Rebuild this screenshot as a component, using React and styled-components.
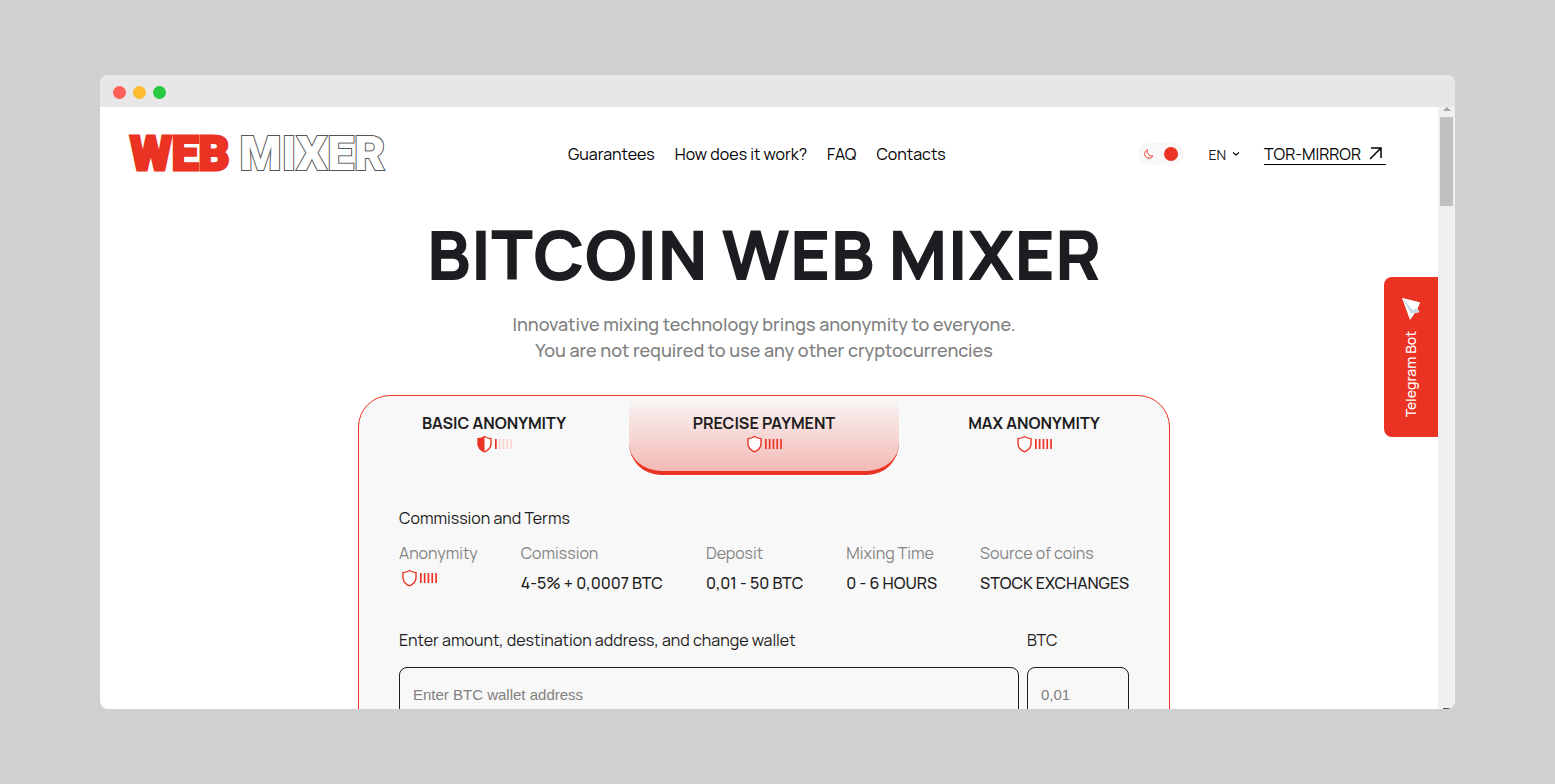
import React, { useState } from "react";
import styled, { createGlobalStyle } from "styled-components";

const GlobalStyle = createGlobalStyle`
  *,
  *::before,
  *::after {
    box-sizing: border-box;
  }

  body {
    margin: 0;
    background: #d0d0d0;
    color: #1c1c21;
    font-family: Manrope, Inter, sans-serif;
    font-size: 16px;
    line-height: 22px;
  }

  h1,
  h2,
  p,
  dl,
  dd {
    margin: 0;
  }
`;

const Desktop = styled.div`
  display: flex;
  height: 100vh;
  padding: 75px 100px;
`;

const Browser = styled.div`
  display: flex;
  flex: 1;
  flex-direction: column;
  min-width: 0;
  overflow: hidden;
  border-radius: 8px;
  background: #fff;
`;

const TitleBar = styled.div`
  display: flex;
  flex: none;
  align-items: center;
  gap: 7px;
  height: 32px;
  padding: 2px 13px 0;
  background: #e7e7e7;
`;

const Dot = styled.span`
  width: 13px;
  height: 13px;
  border-radius: 50%;
  background: ${props => props.$color};
`;

const Viewport = styled.div`
  display: flex;
  flex: 1;
  min-height: 0;
`;

const Page = styled.div`
  position: relative;
  flex: 1;
  min-width: 0;
  overflow: hidden;
`;

const ScrollTrack = styled.div`
  display: flex;
  flex: none;
  flex-direction: column;
  align-items: center;
  width: 17px;
  background: #f0f0f0;
`;

const ScrollArrow = styled.span`
  margin-bottom: 6px;
  border: 4px solid transparent;
  border-top: 0;
  border-bottom-color: #a3a3a3;
`;

const ScrollThumb = styled.span`
  width: 13px;
  height: 89px;
  background: #c1c1c1;
`;

const ScrollEnd = styled.span`
  width: 7px;
  height: 1px;
  margin-top: auto;
  background: #505050;
`;

const Header = styled.header`
  display: flex;
  align-items: center;
  justify-content: space-between;
  padding: 28px 52px 0 30px;
`;

const Logo = styled.a`
  display: flex;
  gap: 10px;
  color: #eb3323;
  font-family: Roboto, sans-serif;
  font-size: 48px;
  font-weight: 900;
  line-height: 38px;
  text-decoration: none;
`;

const LogoSolid = styled.span`
  -webkit-text-stroke: 3px #eb3323;
`;

const LogoOutline = styled.span`
  color: #fff;
  -webkit-text-stroke: 2px #555;
  paint-order: stroke fill;
`;

const Nav = styled.nav`
  display: flex;
  gap: 20px;
  margin-right: 10px;
`;

const NavLink = styled.a`
  color: #000;
  text-decoration: none;
`;

const Tools = styled.div`
  display: flex;
  align-items: center;
  gap: 24px;
`;

const ThemeSwitch = styled.button`
  display: flex;
  align-items: center;
  justify-content: space-between;
  width: 46px;
  height: 22px;
  padding: 0 6px;
  border: 0;
  border-radius: 11px;
  background: #f8f8f8;
`;

const Knob = styled.span`
  width: 14px;
  height: 14px;
  border-radius: 50%;
  background: #eb3323;
`;

const Language = styled.button`
  display: flex;
  align-items: center;
  gap: 6px;
  padding: 0;
  border: 0;
  background: none;
  color: #1c1c21;
  font-family: inherit;
  font-size: 14px;
`;

const TorLink = styled.a`
  display: flex;
  align-items: center;
  gap: 8px;
  height: 22px;
  padding-right: 4px;
  border-bottom: 1px solid #000;
  color: #000;
  text-decoration: none;
`;

const Hero = styled.section`
  padding: 40px 40px 32px 30px;
  text-align: center;
`;

const Title = styled.h1`
  margin-bottom: 16px;
  font-size: 69px;
  font-weight: 800;
  line-height: 82px;
`;

const Lead = styled.p`
  color: #808080;
  font-size: 18px;
  font-weight: 500;
  line-height: 26px;
`;

const CardRow = styled.div`
  display: flex;
  justify-content: center;
  padding: 0 40px 0 30px;
`;

const Card = styled.section`
  flex: 1;
  max-width: 812px;
  overflow: hidden;
  border: 1px solid #eb3323;
  border-radius: 32px;
  background: #f8f8f8;
`;

const Tabs = styled.div`
  display: grid;
  grid-template-columns: repeat(3, 1fr);
`;

const Tab = styled.button`
  display: flex;
  flex-direction: column;
  align-items: center;
  height: 79px;
  padding: 16px 0 0;
  border: 0 solid #eb3323;
  border-bottom-width: ${props => (props.$active ? "4px" : "0")};
  border-radius: 0 0 32px 32px;
  background: ${props =>
    props.$active ? "linear-gradient(#f8f8f8, #f4b9b5)" : "none"};
  color: #1c1c21;
  font-family: inherit;
  font-size: 16px;
  font-weight: 700;
  line-height: 22px;
`;

const LevelIcon = styled.svg`
  display: block;
  width: 36px;
  height: 20px;
`;

const CardBody = styled.div`
  padding: 32px 40px 40px;
`;

const SectionTitle = styled.h2`
  font-size: 16px;
  font-weight: 400;
  line-height: 22px;
`;

const Terms = styled.dl`
  display: flex;
  justify-content: space-between;
  padding: 13px 0 35px;
`;

const TermName = styled.dt`
  margin-bottom: 8px;
  color: #858585;
`;

const TermValue = styled.dd`
  font-weight: 500;
`;

const TermLevel = styled.dd`
  margin-top: -4px;
  padding-left: 2px;
`;

const Form = styled.form`
  display: grid;
  grid-template-columns: 1fr 102px;
  column-gap: 8px;
`;

const Field = styled.div`
  display: flex;
  flex-direction: column;
  gap: 16px;
`;

const Input = styled.input`
  width: 100%;
  height: 56px;
  padding: 0 13px 2px;
  border: 1px solid #1c1c21;
  border-radius: 8px;
  background: transparent;
  font-family: "Liberation Sans", Arial, sans-serif;
  font-size: 15px;

  &::placeholder {
    color: #808080;
  }
`;

const TelegramLink = styled.a`
  position: absolute;
  top: 170px;
  right: 0;
  display: flex;
  flex-direction: column;
  align-items: center;
  gap: 10px;
  width: 54px;
  height: 160px;
  padding-top: 20px;
  border-radius: 8px 0 0 8px;
  background: #eb3323;
  color: #fff;
  font-size: 14px;
  font-weight: 500;
  text-decoration: none;
`;

const Vertical = styled.span`
  writing-mode: vertical-rl;
  transform: rotate(180deg);
`;

const Level = ({ value }) => (
  <LevelIcon viewBox="0 0 36 20" aria-hidden="true">
    <path
      d="M8.5 2.500C10.200 3.700 12.600 4.500 15 4.600V9.700C15 13.500 12.200 16.100 8.500 17.800C4.800 16.100 2 13.500 2 9.700V4.600C4.400 4.500 6.800 3.700 8.500 2.500Z"
      fill="#fff"
      stroke="#eb3323"
      strokeWidth="1.4"
    />
    {value < 5 && (
      <path
        d="M8.500 2.500V17.800C4.800 16.100 2 13.500 2 9.700V4.600C4.400 4.500 6.800 3.700 8.500 2.500Z"
        fill="#eb3323"
      />
    )}
    {[0, 1, 2, 3, 4].map(n => (
      <rect
        key={n}
        x={19 + n * 3.8}
        y="5"
        width="1.7"
        height="10"
        fill={n < value ? "#eb3323" : "#fcd3d0"}
      />
    ))}
  </LevelIcon>
);

const Moon = () => (
  <svg width="10" height="10" viewBox="0 0 10 10" aria-hidden="true">
    <path
      d="M3.4 0.8C0.7 1.9 -0.2 5 1.4 7.3C3.2 9.9 7.3 9.8 9 7C6 7.5 2.5 5 3.4 0.8Z"
      fill="none"
      stroke="#eb3323"
      strokeWidth="1"
      strokeLinejoin="round"
    />
  </svg>
);

const Chevron = () => (
  <svg width="8" height="6" viewBox="0 0 8 6" aria-hidden="true">
    <path d="M1 1.5L4 4L7 1.5" fill="none" stroke="#000" strokeWidth="1.1" />
  </svg>
);

const Arrow = () => (
  <svg width="13" height="13" viewBox="0 0 13 13" aria-hidden="true">
    <path d="M1 12L12 1M2 1H12V11" fill="none" stroke="#000" strokeWidth="1.5" />
  </svg>
);

const Plane = () => (
  <svg width="20" height="24" viewBox="0 0 20 24" aria-hidden="true">
    <path d="M1 1L19 5.5L16.5 12L18.5 15L14 16L9 23Z" fill="#fff" />
    <path d="M1 1L10 16.5L14 16L18.5 15L15.5 11.5L12 13Z" fill="#c4dbea" />
    <path d="M1 1L13 12.5L19 5.5Z" fill="#fff" />
  </svg>
);

const links = ["Guarantees", "How does it work?", "FAQ", "Contacts"];

const tabs = [
  { title: "BASIC ANONYMITY", level: 1 },
  { title: "PRECISE PAYMENT", level: 5 },
  { title: "MAX ANONYMITY", level: 5 }
];

const terms = [
  { name: "Comission", value: "4-5% + 0,0007 BTC" },
  { name: "Deposit", value: "0,01 - 50 BTC" },
  { name: "Mixing Time", value: "0 - 6 HOURS" },
  { name: "Source of coins", value: "STOCK EXCHANGES" }
];

const App = () => {
  const [active, setActive] = useState(1);

  return (
    <Desktop>
      <GlobalStyle />
      <Browser>
        <TitleBar>
          <Dot $color="#ff5f57" />
          <Dot $color="#febc2e" />
          <Dot $color="#28c840" />
        </TitleBar>
        <Viewport>
          <Page>
            <Header>
              <Logo href="#">
                <LogoSolid>WEB</LogoSolid>
                <LogoOutline>MIXER</LogoOutline>
              </Logo>
              <Nav>
                {links.map(link => (
                  <NavLink key={link} href="#">
                    {link}
                  </NavLink>
                ))}
              </Nav>
              <Tools>
                <ThemeSwitch type="button" aria-label="Dark theme">
                  <Moon />
                  <Knob />
                </ThemeSwitch>
                <Language type="button">
                  EN
                  <Chevron />
                </Language>
                <TorLink href="#">
                  TOR-MIRROR
                  <Arrow />
                </TorLink>
              </Tools>
            </Header>
            <Hero>
              <Title>BITCOIN WEB MIXER</Title>
              <Lead>
                Innovative mixing technology brings anonymity to everyone.
                <br />
                You are not required to use any other cryptocurrencies
              </Lead>
            </Hero>
            <CardRow>
              <Card>
                <Tabs role="tablist">
                  {tabs.map((tab, i) => (
                    <Tab
                      key={tab.title}
                      type="button"
                      role="tab"
                      aria-selected={i === active}
                      $active={i === active}
                      onClick={() => setActive(i)}
                    >
                      {tab.title}
                      <Level value={tab.level} />
                    </Tab>
                  ))}
                </Tabs>
                <CardBody>
                  <SectionTitle>Commission and Terms</SectionTitle>
                  <Terms>
                    <div>
                      <TermName>Anonymity</TermName>
                      <TermLevel>
                        <Level value={tabs[active].level} />
                      </TermLevel>
                    </div>
                    {terms.map(term => (
                      <div key={term.name}>
                        <TermName>{term.name}</TermName>
                        <TermValue>{term.value}</TermValue>
                      </div>
                    ))}
                  </Terms>
                  <Form>
                    <Field>
                      <label htmlFor="wallet">
                        Enter amount, destination address, and change wallet
                      </label>
                      <Input id="wallet" placeholder="Enter BTC wallet address" />
                    </Field>
                    <Field>
                      <label htmlFor="amount">BTC</label>
                      <Input id="amount" placeholder="0,01" />
                    </Field>
                  </Form>
                </CardBody>
              </Card>
            </CardRow>
            <TelegramLink href="#">
              <Plane />
              <Vertical>Telegram Bot</Vertical>
            </TelegramLink>
          </Page>
          <ScrollTrack>
            <ScrollArrow />
            <ScrollThumb />
            <ScrollEnd />
          </ScrollTrack>
        </Viewport>
      </Browser>
    </Desktop>
  );
};

export default App;
